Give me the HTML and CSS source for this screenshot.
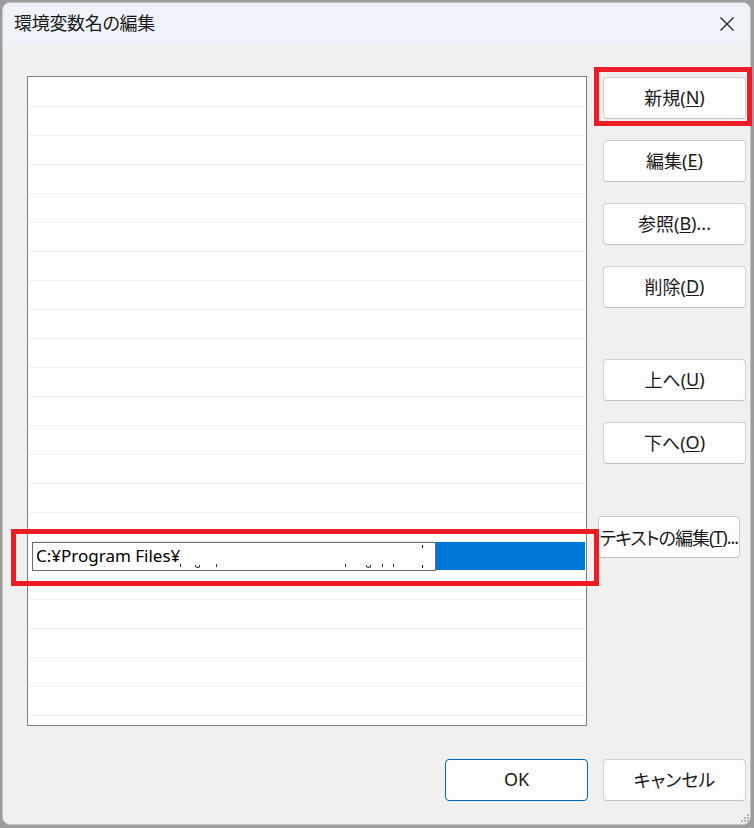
FILE: index.html
```html
<!DOCTYPE html>
<html lang="ja">
<head>
<meta charset="utf-8">
<title>環境変数名の編集</title>
<link rel="stylesheet" href="styles.css">
</head>
<body>
<div class="window">
  <div class="titlebar">
    <span class="title">環境変数名の編集</span>
    <svg class="close" width="16" height="16" viewBox="0 0 16 16"><path d="M1.5 1.5 L14.5 14.5 M14.5 1.5 L1.5 14.5" stroke="#1b1b1b" stroke-width="1.2" fill="none"/></svg>
  </div>
  <div class="content">
    <div class="main">
      <div class="list">
        <div class="row"></div><div class="row"></div><div class="row"></div><div class="row"></div>
        <div class="row"></div><div class="row"></div><div class="row"></div><div class="row"></div>
        <div class="row"></div><div class="row"></div><div class="row"></div><div class="row"></div>
        <div class="row"></div><div class="row"></div><div class="row"></div><div class="row"></div>
        <div class="row row-edit">
          <div class="edit-box">
            <span class="edit-text">C:¥Program Files¥</span>
            <span class="frag frag-1"></span>
            <span class="frag frag-g frag-2"></span>
            <span class="frag frag-3"></span>
            <span class="frag frag-4"></span>
            <span class="frag frag-g frag-5"></span>
            <span class="frag frag-6"></span>
            <span class="frag frag-7"></span>
            <span class="tick tick-top"></span>
            <span class="tick tick-bottom"></span>
          </div>
          <div class="edit-fill"></div>
        </div>
        <div class="row"></div><div class="row"></div><div class="row"></div><div class="row"></div>
        <div class="row"></div><div class="row"></div>
      </div>
      <div class="side">
        <button class="btn">新規(<u>N</u>)</button>
        <button class="btn">編集(<u>E</u>)</button>
        <button class="btn">参照(<u>B</u>)...</button>
        <button class="btn">削除(<u>D</u>)</button>
        <button class="btn btn-up">上へ(<u>U</u>)</button>
        <button class="btn">下へ(<u>O</u>)</button>
        <button class="btn btn-text">テキストの編集(<u>T</u>)...</button>
      </div>
    </div>
    <div class="footer">
      <button class="btn btn-ok">OK</button>
      <button class="btn">キャンセル</button>
    </div>
  </div>
  <svg class="grip" width="10" height="10" viewBox="0 0 10 10">
    <rect x="7" y="1" width="2" height="2" fill="#b4b4b4"/>
    <rect x="4" y="4" width="2" height="2" fill="#b4b4b4"/>
    <rect x="7" y="4" width="2" height="2" fill="#b4b4b4"/>
    <rect x="1" y="7" width="2" height="2" fill="#b4b4b4"/>
    <rect x="4" y="7" width="2" height="2" fill="#b4b4b4"/>
    <rect x="7" y="7" width="2" height="2" fill="#b4b4b4"/>
  </svg>
</div>
<div class="mark mark-new"></div>
<div class="mark mark-row"></div>
</body>
</html>
```

FILE: styles.css
```css
* { box-sizing: border-box; }

html, body {
  margin: 0;
  padding: 0;
}

body {
  width: 754px;
  height: 828px;
  background: #9c9c9c;
  font-family: "Noto Sans", "Noto Sans CJK JP", sans-serif;
  font-feature-settings: "palt";
  color: #1a1a1a;
  position: relative;
  overflow: hidden;
}

.window {
  position: relative;
  margin: 2px 0 0 2px;
  width: 749px;
  height: 823px;
  border: 1px solid #c4c4c4;
  border-radius: 8px;
  background: #f0f0f0;
  overflow: hidden;
  display: flex;
  flex-direction: column;
}

.titlebar {
  height: 42px;
  background: #eef3f9;
  display: flex;
  align-items: center;
  padding: 0 0 4px 11px;
  flex: none;
}

.title {
  font-size: 18px;
  font-family: "Noto Sans CJK JP", sans-serif;
  color: #1a1a1a;
  letter-spacing: -0.3px;
}

.close {
  margin-left: auto;
  margin-right: 15px;
  margin-top: 3px;
}

.content {
  flex: 1;
  display: flex;
  flex-direction: column;
  padding: 31px 4px 0 24px;
}

.main {
  display: flex;
  align-items: flex-start;
}

.list {
  width: 560px;
  height: 650px;
  border: 1px solid #7d7d7d;
  background: #ffffff;
  padding-top: 1px;
  overflow: hidden;
  flex: none;
}

.row {
  height: 29px;
  margin: 0 1px;
  border-bottom: 1px solid #efefef;
}

.row-edit {
  display: flex;
  align-items: flex-start;
  border-bottom-color: transparent;
}

.edit-box {
  position: relative;
  width: 404px;
  height: 29px;
  margin-left: 3px;
  border: 1px solid #6a6a6a;
  background: #ffffff;
  padding-left: 3px;
  font-size: 17px;
  line-height: 26px;
  color: #000;
  white-space: nowrap;
  flex: none;
}

.edit-fill {
  flex: 1;
  height: 28px;
  background: #0078d7;
}

.frag {
  position: absolute;
  bottom: 3px;
  width: 1px;
  height: 3px;
  background: #333;
}

.frag-g {
  width: 5px;
  height: 3px;
  bottom: 2px;
  border-radius: 0 0 3px 3px;
  background: transparent;
  border: 1px solid #333;
  border-top: none;
}

.frag-1 { left: 147px; }
.frag-2 { left: 162px; }
.frag-3 { left: 183px; }
.frag-4 { left: 312px; }
.frag-5 { left: 333px; }
.frag-6 { left: 349px; }
.frag-7 { left: 360px; }

.tick {
  position: absolute;
  left: 389px;
  width: 1px;
  height: 3px;
  background: #111;
}

.tick-top { top: 2px; }
.tick-bottom { bottom: 2px; }

.side {
  display: flex;
  flex-direction: column;
  align-items: flex-start;
  margin-left: 16px;
  padding-top: 1px;
  gap: 21px;
}

.btn {
  width: 143px;
  height: 42px;
  background: #fdfdfd;
  border: 1px solid #d0d0d0;
  border-bottom-color: #c2c2c2;
  border-radius: 4px;
  font-family: "Noto Sans", "Noto Sans CJK JP", sans-serif;
  font-feature-settings: "palt";
  font-size: 18px;
  color: #1a1a1a;
  padding: 0 0 2px 0;
  display: flex;
  align-items: center;
  justify-content: center;
  white-space: nowrap;
}

.btn u {
  text-underline-offset: 2px;
  text-decoration-thickness: 1px;
}

.btn-up {
  margin-top: 30px;
}

.btn-text {
  margin-top: 31px;
  margin-left: -5px;
  width: 142px;
  letter-spacing: -1px;
  padding: 0;
}

.footer {
  display: flex;
  justify-content: flex-end;
  gap: 15px;
  margin-top: 33px;
}

.btn-ok {
  border: 1px solid #0067c0;
}

.grip {
  position: absolute;
  right: 0px;
  bottom: 1px;
}

.mark {
  position: absolute;
  border: 5px solid #ed1c24;
}

.mark-new {
  left: 594px;
  top: 67px;
  width: 158px;
  height: 59px;
}

.mark-row {
  left: 11px;
  top: 529px;
  width: 588px;
  height: 57px;
}
```
